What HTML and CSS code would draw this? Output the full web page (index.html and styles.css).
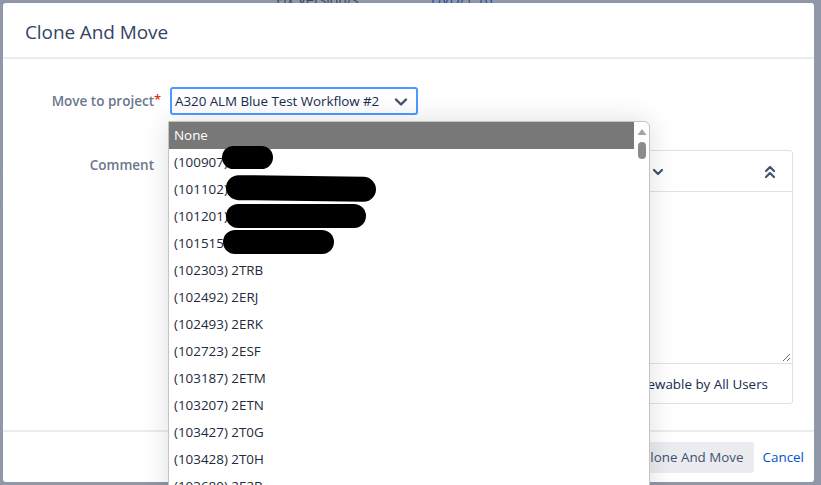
FILE: index.html
```html
<!DOCTYPE html>
<html>
<head>
<meta charset="utf-8">
<link rel="stylesheet" href="styles.css">
</head>
<body>
<div class="page">
  <div class="page-row">
    <span class="page-label">Fix Version/s:</span>
    <span class="page-link">DVD/1.16</span>
  </div>
  <div class="page-side">
    <span class="side-a">d</span>
    <span class="side-b">o</span>
    <span class="side-c">4</span>
    <span class="side-d">E</span>
    <span class="side-e">c</span>
  </div>
</div>

<section class="dialog">
  <header class="dialog-header">
    <h2 class="dialog-title">Clone And Move</h2>
  </header>

  <div class="dialog-body">
    <div class="form-row">
      <label class="form-label">Move to project<span class="req">*</span></label>
      <div class="select-wrap">
        <div class="select">
          <span class="select-text">A320 ALM Blue Test Workflow #2</span>
          <svg class="chev" width="14" height="10" viewBox="0 0 14 10"><path d="M2 2.5 L7 7.5 L12 2.5" fill="none" stroke="#42526e" stroke-width="2.4" stroke-linecap="round" stroke-linejoin="round"/></svg>
        </div>

        <div class="dropdown">
          <ul class="options">
            <li class="opt selected">None</li>
            <li class="opt">(100907)<span class="blot b1"></span></li>
            <li class="opt">(101102)<span class="blot b2"></span></li>
            <li class="opt">(101201)<span class="blot b3"></span></li>
            <li class="opt">(101515<span class="blot b4"></span></li>
            <li class="opt">(102303) 2TRB</li>
            <li class="opt">(102492) 2ERJ</li>
            <li class="opt">(102493) 2ERK</li>
            <li class="opt">(102723) 2ESF</li>
            <li class="opt">(103187) 2ETM</li>
            <li class="opt">(103207) 2ETN</li>
            <li class="opt">(103427) 2T0G</li>
            <li class="opt">(103428) 2T0H</li>
            <li class="opt">(103680) 2E2B</li>
          </ul>
          <div class="scrollbar">
            <svg class="sb-up" width="10" height="8" viewBox="0 0 10 8"><path d="M5 1 L9.5 7 L0.5 7 Z" fill="#a3a3a3"/></svg>
            <div class="sb-thumb"></div>
          </div>
        </div>
      </div>
    </div>

    <div class="form-row comment-row">
      <label class="form-label">Comment</label>
      <div class="comment-box">
        <div class="toolbar">
          <svg class="tb-chev" width="12" height="8" viewBox="0 0 12 8"><path d="M2 2 L6 6 L10 2" fill="none" stroke="#42526e" stroke-width="2.2" stroke-linecap="round" stroke-linejoin="round"/></svg>
          <svg class="tb-collapse" width="12" height="14" viewBox="0 0 12 14"><path d="M2 6 L6 2 L10 6 M2 12 L6 8 L10 12" fill="none" stroke="#42526e" stroke-width="2.2" stroke-linecap="round" stroke-linejoin="round"/></svg>
        </div>
        <div class="textarea">
          <svg class="grip" width="10" height="10" viewBox="0 0 10 10"><path d="M9 2 L2 9 M9 6 L6 9" stroke="#6b6b6b" stroke-width="1"/></svg>
        </div>
        <div class="visibility">Viewable by All Users</div>
      </div>
    </div>
  </div>

  <footer class="dialog-footer">
    <button class="btn">Clone And Move</button>
    <a class="cancel">Cancel</a>
  </footer>
</section>
</body>
</html>
```

FILE: styles.css
```css
* { box-sizing: border-box; }
html, body { margin: 0; padding: 0; }
body {
  width: 821px;
  height: 485px;
  overflow: hidden;
  background: #8f97a8;
  font-family: "Open Sans", "Noto Sans", Arial, sans-serif;
  position: relative;
}

.page { color: #3b4a66; font-size: 14px; }
.page-row { display: flex; gap: 0; margin-top: -10px; padding-left: 276px; height: 20px; }
.page-label { width: 155px; color: #3a4763; }
.page-link { color: #1d4fa8; }
.page-side { display: flex; flex-direction: column; font-size: 14px; margin-left: -8px; }
.side-a { margin-top: 130px; color: #1d4fa8; }
.side-b { margin-top: 4px; }
.side-c { margin-top: 8px; color: #1d4fa8; }
.side-d { margin-top: 2px; }
.side-e { margin-top: 106px; }

.dialog {
  position: absolute;
  top: 3px;
  left: 3px;
  width: 811px;
  height: 479px;
  background: #fff;
  border-radius: 3px;
  display: flex;
  flex-direction: column;
}

.dialog-header {
  height: 56px;
  border-bottom: 2px solid #ebecf0;
  display: flex;
  align-items: center;
  padding: 4px 22px 0;
}
.dialog-title {
  margin: 0;
  font-weight: 400;
  font-size: 19px;
  color: #344563;
  letter-spacing: -0.1px;
}

.dialog-body {
  flex: 1;
  padding: 28px 21px 0 0;
  display: flex;
  flex-direction: column;
  gap: 35px;
}

.form-row { display: flex; gap: 16px; align-items: flex-start; }
.form-label {
  width: 151px;
  flex: none;
  text-align: right;
  font-size: 13.5px;
  font-weight: 600;
  color: #6b778c;
  line-height: 28px;
  position: relative;
}
.req { color: #de350b; position: absolute; right: -7px; top: -2px; font-size: 13px; }
.comment-row .form-label { line-height: 20px; padding-top: 5px; }

.select-wrap { position: relative; width: 248px; }
.select {
  height: 28px;
  border: 2px solid #4c9aff;
  border-radius: 3px;
  display: flex;
  align-items: center;
  justify-content: space-between;
  padding: 0 8px 0 3px;
  font-size: 13.4px;
  color: #172b4d;
}
.select-text { letter-spacing: -0.05px; }
.chev { margin-top: 1px; }

.dropdown {
  position: absolute;
  left: -2px;
  top: 34px;
  width: 482px;
  height: 400px;
  background: #fff;
  border: 1px solid #c4c4c4;
  border-radius: 0 6px 0 0;
  box-shadow: 0 0 28px rgba(0, 0, 0, 0.13);
  display: flex;
  z-index: 5;
}
.options {
  list-style: none;
  margin: 0;
  padding: 0;
  flex: 1;
}
.opt {
  height: 27px;
  line-height: 27px;
  padding-left: 5px;
  font-size: 13.4px;
  color: #23293a;
  position: relative;
  white-space: nowrap;
}
.opt.selected { background: #787878; color: #fff; }
.blot {
  position: absolute;
  background: #000;
  border-radius: 14px;
}
.b1 { left: 53px; top: -3px; width: 51px; height: 23px; }
.b2 { left: 57px; top: 0px; width: 150px; height: 25px; transform: rotate(0.8deg); }
.b3 { left: 57px; top: 1px; width: 140px; height: 24px; }
.b4 { left: 54px; top: 0px; width: 111px; height: 24px; }

.scrollbar {
  width: 15px;
  flex: none;
  display: flex;
  flex-direction: column;
  align-items: center;
  padding-top: 6px;
  border-radius: 0 6px 0 0;
}
.sb-up { display: block; }
.sb-thumb {
  margin-top: 6px;
  width: 8px;
  height: 17px;
  border-radius: 4px;
  background: #8c8c8c;
}

.comment-box {
  width: 623px;
  height: 254px;
  border: 1px solid #dfe1e6;
  border-radius: 3px;
  display: flex;
  flex-direction: column;
}
.toolbar {
  height: 41px;
  border-bottom: 1px solid #dfe1e6;
  display: flex;
  align-items: center;
  justify-content: space-between;
  padding: 0 16px 0 481px;
}
.tb-chev { margin-top: 1px; }
.tb-collapse { margin-top: 2px; }
.textarea {
  flex: 1;
  border-bottom: 1px solid #dfe1e6;
  position: relative;
}
.grip { position: absolute; right: 1px; bottom: 1px; }
.visibility {
  height: 39px;
  display: flex;
  align-items: center;
  justify-content: flex-end;
  padding-right: 24px;
  font-size: 13.4px;
  color: #172b4d;
}

.dialog-footer {
  height: 52px;
  border-top: 2px solid #ebecf0;
  display: flex;
  align-items: center;
  justify-content: flex-end;
  padding: 0 10px 4px 0;
}
.btn {
  height: 31px;
  padding: 0 10px;
  border: none;
  border-radius: 3px;
  background: #ebecf0;
  color: #42526e;
  font-family: inherit;
  font-size: 13.4px;
  margin-top: 4px;
}
.cancel {
  margin-left: 9px;
  margin-top: 4px;
  color: #0052cc;
  font-size: 13.4px;
}
```
